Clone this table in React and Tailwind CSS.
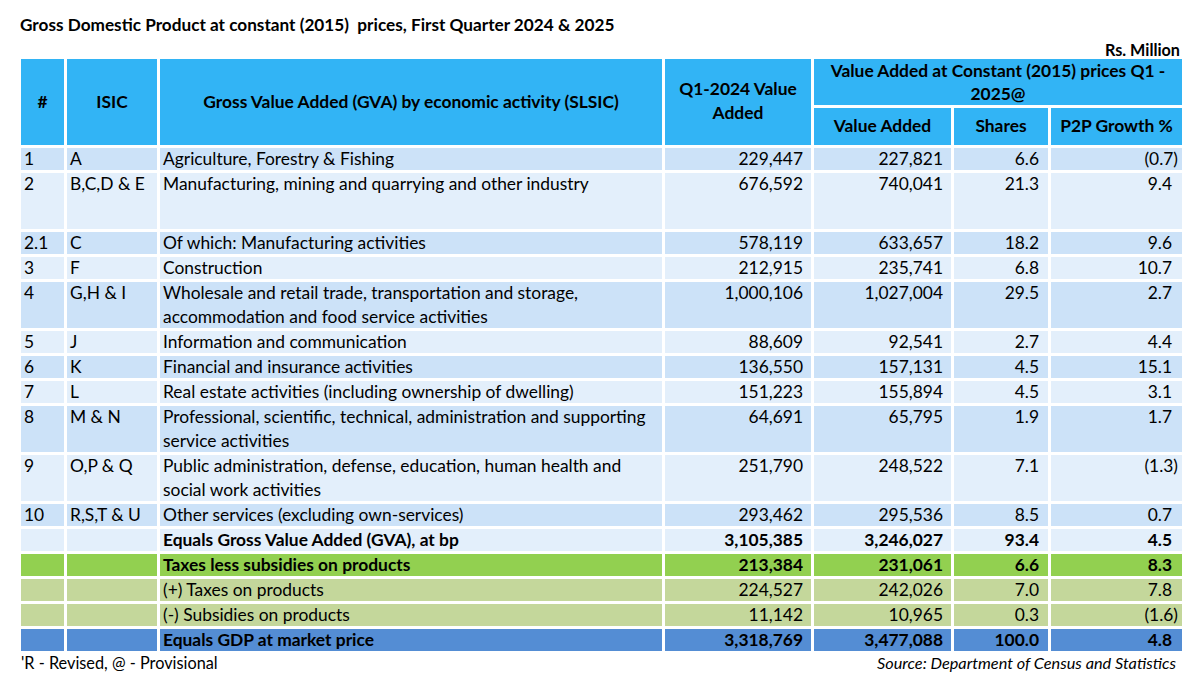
import React from "react";

// GDP Q1 2024/2025 table, constant (2015) prices
const ROWS = [
  { n: "1", isic: "A", lines: ["Agriculture, Forestry & Fishing"], q1: "229,447", va: "227,821", sh: "6.6", g: "(0.7)", bg: "dark" },
  { n: "2", isic: "B,C,D & E", lines: ["Manufacturing, mining and quarrying and other industry"], q1: "676,592", va: "740,041", sh: "21.3", g: "9.4", bg: "light", tall: true },
  { n: "2.1", isic: "C", lines: ["Of which: Manufacturing activities"], q1: "578,119", va: "633,657", sh: "18.2", g: "9.6", bg: "dark" },
  { n: "3", isic: "F", lines: ["Construction"], q1: "212,915", va: "235,741", sh: "6.8", g: "10.7", bg: "light" },
  { n: "4", isic: "G,H & I", lines: ["Wholesale and retail trade, transportation and storage,", "accommodation and food service activities"], q1: "1,000,106", va: "1,027,004", sh: "29.5", g: "2.7", bg: "dark" },
  { n: "5", isic: "J", lines: ["Information and communication"], q1: "88,609", va: "92,541", sh: "2.7", g: "4.4", bg: "light" },
  { n: "6", isic: "K", lines: ["Financial and insurance activities"], q1: "136,550", va: "157,131", sh: "4.5", g: "15.1", bg: "dark" },
  { n: "7", isic: "L", lines: ["Real estate activities (including ownership of dwelling)"], q1: "151,223", va: "155,894", sh: "4.5", g: "3.1", bg: "light" },
  { n: "8", isic: "M & N", lines: ["Professional, scientific, technical, administration and supporting", "service activities"], q1: "64,691", va: "65,795", sh: "1.9", g: "1.7", bg: "dark" },
  { n: "9", isic: "O,P & Q", lines: ["Public administration, defense, education, human health and", "social work activities"], q1: "251,790", va: "248,522", sh: "7.1", g: "(1.3)", bg: "light" },
  { n: "10", isic: "R,S,T & U", lines: ["Other services (excluding own-services)"], q1: "293,462", va: "295,536", sh: "8.5", g: "0.7", bg: "dark" },
  { n: "", isic: "", lines: ["Equals Gross Value Added (GVA), at bp"], q1: "3,105,385", va: "3,246,027", sh: "93.4", g: "4.5", bg: "light", bold: true },
  { n: "", isic: "", lines: ["Taxes less subsidies on products"], q1: "213,384", va: "231,061", sh: "6.6", g: "8.3", bg: "green", bold: true },
  { n: "", isic: "", lines: ["(+) Taxes on products"], q1: "224,527", va: "242,026", sh: "7.0", g: "7.8", bg: "olive" },
  { n: "", isic: "", lines: ["(-) Subsidies on products"], q1: "11,142", va: "10,965", sh: "0.3", g: "(1.6)", bg: "olive" },
  { n: "", isic: "", lines: ["Equals GDP at market price"], q1: "3,318,769", va: "3,477,088", sh: "100.0", g: "4.8", bg: "blue", bold: true },
];

const BG = {
  dark: "bg-[#cce2f8]",
  light: "bg-[#e3effb]",
  green: "bg-[#92d050]",
  olive: "bg-[#c4d79b]",
  blue: "bg-[#548dd4]",
};

export default function App() {
  return (
    <div className="w-[1200px] h-[677px] bg-white text-black font-['Lato',sans-serif] overflow-hidden">
      <h1 className="pt-[14px] pl-[20px] text-[17.2px] font-bold leading-[22px]">
        Gross Domestic Product at constant (2015)&nbsp; prices, First Quarter 2024 &amp; 2025
      </h1>
      <div className="mt-[4px] pr-[20px] text-right text-[16.2px] font-bold leading-[19px]">Rs. Million</div>

      <table className="ml-[18px] w-[1167px] table-fixed border-separate border-spacing-[3px] -mt-[3px] text-[17.4px]">
        <colgroup>
          <col className="w-[43px]" />
          <col className="w-[90px]" />
          <col className="w-[502px]" />
          <col className="w-[146px]" />
          <col className="w-[137px]" />
          <col className="w-[94px]" />
          <col className="w-[131px]" />
        </colgroup>
        <thead className="font-bold">
          <tr className="h-[45px]">
            <th rowSpan={2} className="bg-[#32b4f5] text-center">#</th>
            <th rowSpan={2} className="bg-[#32b4f5] text-center">ISIC</th>
            <th rowSpan={2} className="bg-[#32b4f5] text-center">Gross Value Added (GVA) by economic activity (SLSIC)</th>
            <th rowSpan={2} className="bg-[#32b4f5] text-center leading-[24px] px-[10px] pb-[2px]">Q1-2024 Value Added</th>
            <th colSpan={3} className="bg-[#32b4f5] text-center leading-[23px] px-[4px]">Value Added at Constant (2015) prices Q1 - 2025@</th>
          </tr>
          <tr className="h-[37px]">
            <th className="bg-[#32b4f5] text-center">Value Added</th>
            <th className="bg-[#32b4f5] text-center">Shares</th>
            <th className="bg-[#32b4f5] text-center">P2P Growth %</th>
          </tr>
        </thead>
        <tbody className="leading-[22px]">
          {ROWS.map((r, i) => {
            const bg = BG[r.bg];
            const h = r.tall ? "h-[56px]" : r.lines.length > 1 ? "h-[46px]" : "h-[22px]";
            const paren = r.g.startsWith("(");
            return (
              <tr key={i} className={`${h} ${r.bold ? "font-bold" : ""}`}>
                <td className={`${bg} align-top px-[3px] font-normal`}>{r.n}</td>
                <td className={`${bg} align-top px-[3px] font-normal whitespace-nowrap`}>{r.isic}</td>
                <td className={`${bg} align-top px-[3px] whitespace-nowrap`}>
                  {r.lines.map((l, j) => (
                    <div key={j} className={j > 0 ? "mt-[2px]" : ""}>{l}</div>
                  ))}
                </td>
                <td className={`${bg} align-top text-right pr-[8px]`}>{r.q1}</td>
                <td className={`${bg} align-top text-right pr-[8px]`}>{r.va}</td>
                <td className={`${bg} align-top text-right pr-[9px]`}>{r.sh}</td>
                <td className={`${bg} align-top text-right ${paren ? "pr-[4px]" : "pr-[10px]"}`}>{r.g}</td>
              </tr>
            );
          })}
        </tbody>
      </table>

      <div className="flex justify-between pl-[21px] pr-[24px] -mt-[1px] text-[16.3px] leading-[20px]">
        <span>'R - Revised, @ - Provisional</span>
        <span className="italic">Source: Department of Census and Statistics</span>
      </div>
    </div>
  );
}
